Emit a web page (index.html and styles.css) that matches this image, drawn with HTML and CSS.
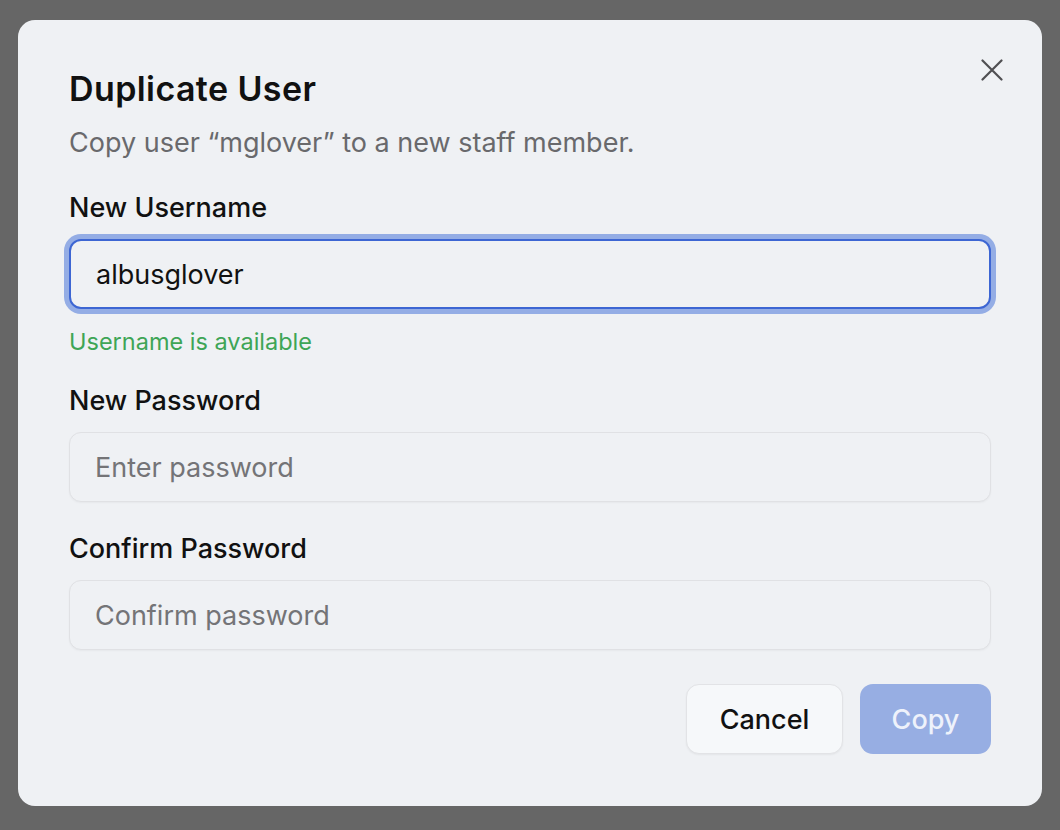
FILE: index.html
```html
<!DOCTYPE html>
<html lang="en">
<head>
    <meta charset="UTF-8">
    <meta name="viewport" content="width=device-width, initial-scale=1.0">
    <title>Duplicate User</title>
    <link rel="stylesheet" href="styles.css">
</head>
<body>
    <div class="dialog">
        <button class="close-btn" aria-label="Close">
            <svg width="22" height="22" viewBox="0 0 22 22">
                <path d="M1.5 1.5 L20.5 20.5 M20.5 1.5 L1.5 20.5" stroke="#4f4f52" stroke-width="2.2" stroke-linecap="round" fill="none"/>
            </svg>
        </button>

        <h2 class="dialog-title">Duplicate User</h2>
        <p class="dialog-subtitle">Copy user &ldquo;mglover&rdquo; to a new staff member.</p>

        <div class="field">
            <label for="username">New Username</label>
            <input type="text" id="username" class="input input-focus" value="albusglover">
            <p class="helper">Username is available</p>
        </div>

        <div class="field">
            <label for="password">New Password</label>
            <input type="password" id="password" class="input" placeholder="Enter password">
        </div>

        <div class="field">
            <label for="confirm">Confirm Password</label>
            <input type="password" id="confirm" class="input" placeholder="Confirm password">
        </div>

        <div class="actions">
            <button class="btn btn-cancel">Cancel</button>
            <button class="btn btn-copy">Copy</button>
        </div>
    </div>
</body>
</html>
```

FILE: styles.css
```css
body {
    margin: 0;
    padding: 20px 18px;
    background-color: #666666;
    font-family: Inter, "Noto Sans", Arial, sans-serif;
}
.dialog {
    position: relative;
    width: 1024px;
    height: 786px;
    box-sizing: border-box;
    padding: 49px 51px 0 51px;
    background-color: #eff1f4;
    border-radius: 17px;
}
.close-btn {
    position: absolute;
    top: 39px;
    right: 39px;
    width: 22px;
    height: 22px;
    padding: 0;
    border: none;
    background: none;
    cursor: pointer;
}
.close-btn svg {
    display: block;
}
.dialog-title {
    margin: 0;
    font-size: 34px;
    line-height: 40px;
    font-weight: 600;
    color: #111111;
    letter-spacing: 0.4px;
}
.dialog-subtitle {
    margin: 16px 0 0 0;
    font-size: 27px;
    line-height: 36px;
    color: #69696c;
}
.field {
    margin-top: 29px;
}
.field label {
    display: block;
    font-size: 27px;
    line-height: 36px;
    font-weight: 500;
    color: #111111;
}
.input {
    display: block;
    width: 100%;
    height: 70px;
    margin-top: 13px;
    box-sizing: border-box;
    padding: 0 25px;
    font-family: inherit;
    font-size: 27px;
    color: #111111;
    background-color: #eff1f4;
    border: 1.5px solid #e0e1e4;
    border-radius: 12px;
    box-shadow: 0 1px 2px rgba(0, 0, 0, 0.04);
    outline: none;
}
.input::placeholder {
    color: #747477;
}
.input-focus {
    border: 2px solid #3d66d3;
    box-shadow: 0 0 0 5px #94ade5;
}
.helper {
    margin: 18px 0 -3px 0;
    font-size: 23.5px;
    line-height: 30px;
    color: #3ea556;
}
.actions {
    display: flex;
    justify-content: flex-end;
    gap: 17px;
    margin-top: 34px;
}
.btn {
    height: 70px;
    box-sizing: border-box;
    font-family: inherit;
    font-size: 27px;
    font-weight: 500;
    border-radius: 13px;
    cursor: pointer;
}
.btn-cancel {
    width: 157px;
    background-color: #f6f8fa;
    color: #111111;
    border: 1.5px solid #e2e3e6;
    box-shadow: 0 1px 2px rgba(0, 0, 0, 0.05);
}
.btn-copy {
    width: 131px;
    background-color: #97aee3;
    color: #eef2fb;
    border: none;
}
```
